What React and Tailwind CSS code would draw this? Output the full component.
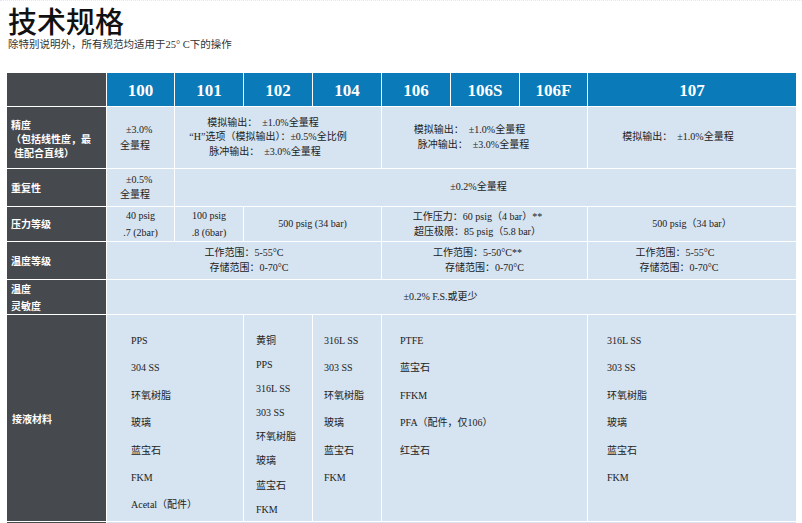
import React from "react";

const label = "bg-[#46494e] text-white font-bold text-[10px] leading-[14px] px-[4px] flex items-center font-['Noto_Sans_CJK_SC',sans-serif]";
const cell = "bg-[#d6e3f0] text-[#222] text-[10px] leading-[14.5px]";
const center = `${cell} flex flex-col items-center justify-center text-center`;
const head = "bg-[#0a7ab9] text-white font-bold text-[17px] pt-[3px] flex items-center justify-center font-['Liberation_Serif',serif]";

const List = ({ items, className }) => (
  <div className={`${cell} ${className}`}>
    {items.map((t, i) => (
      <div key={i}>{t}</div>
    ))}
  </div>
);

const App = () => {
  return (
    <div className="w-[802px] h-[523px] overflow-hidden bg-white border-t border-dotted border-gray-200 font-['Liberation_Serif','Noto_Sans_CJK_SC',serif]">
      <div className="pl-[8px] pt-[3px]">
        <h1 className="text-[29px] leading-[32px] font-medium text-[#111] font-['Noto_Sans_CJK_SC',sans-serif]">技术规格</h1>
        <p className="mt-[2px] text-[10.5px] leading-[14px] text-[#333]">除特别说明外，所有规范均适用于25° C下的操作</p>
      </div>

      <div className="ml-[7px] mt-[21px] w-[789px] grid gap-px bg-white grid-cols-[99px_67px_68px_68px_68px_68px_68px_67px_208px] grid-rows-[33px_61px_37px_34px_37px_34px_206px_20px]">
        {/* header */}
        <div className="bg-[#46494e]"></div>
        <div className={head}>100</div>
        <div className={head}>101</div>
        <div className={head}>102</div>
        <div className={head}>104</div>
        <div className={head}>106</div>
        <div className={head}>106S</div>
        <div className={head}>106F</div>
        <div className={head}>107</div>

        {/* 精度 */}
        <div className={`${label} flex-col !items-start justify-center pt-[2px]`}>
          <div>精度</div>
          <div>（包括线性度，最</div>
          <div className="ml-[3px]">佳配合直线）</div>
        </div>
        <div className={`${cell} flex flex-col justify-center pl-[13px] leading-[16px]`}>
          <div className="pl-[6px]">±3.0%</div>
          <div>全量程</div>
        </div>
        <div className={`${center} col-span-3 pr-[20px]`}>
          <div className="pr-[10px]">模拟输出：&nbsp;&nbsp;±1.0%全量程</div>
          <div>“H”选项（模拟输出）：±0.5%全比例</div>
          <div className="pr-[6px]">脉冲输出：&nbsp;&nbsp;±3.0%全量程</div>
        </div>
        <div className={`${center} col-span-3 pr-[30px]`}>
          <div>模拟输出：&nbsp;&nbsp;±1.0%全量程</div>
          <div className="pl-[8px]">脉冲输出：&nbsp;&nbsp;±3.0%全量程</div>
        </div>
        <div className={`${center} pr-[28px]`}>
          <div>模拟输出：&nbsp;&nbsp;±1.0%全量程</div>
        </div>

        {/* 重复性 */}
        <div className={label}>重复性</div>
        <div className={`${cell} flex flex-col justify-center pl-[13px]`}>
          <div className="pl-[6px]">±0.5%</div>
          <div>全量程</div>
        </div>
        <div className={`${center} col-span-7 pr-[14px]`}>±0.2%全量程</div>

        {/* 压力等级 */}
        <div className={label}>压力等级</div>
        <div className={`${center} leading-[17px]`}>
          <div>40 psig</div>
          <div>.7 (2bar)</div>
        </div>
        <div className={`${center} leading-[17px]`}>
          <div>100 psig</div>
          <div>.8 (6bar)</div>
        </div>
        <div className={`${center} col-span-2`}>500 psig (34 bar)</div>
        <div className={`${center} col-span-3 text-[8.5px] leading-[15px] pr-[14px]`}>
          <div>工作压力：60 psig（4 bar）**</div>
          <div>超压极限：85 psig（5.8 bar）</div>
        </div>
        <div className={center}>500 psig（34 bar）</div>

        {/* 温度等级 */}
        <div className={label}>温度等级</div>
        <div className={`${center} col-span-4`}>
          <div>工作范围：5-55°C</div>
          <div className="pl-[10px]">存储范围：0-70°C</div>
        </div>
        <div className={`${center} col-span-3 pr-[14px]`}>
          <div>工作范围：5-50°C**</div>
          <div className="pl-[14px]">存储范围：0-70°C</div>
        </div>
        <div className={`${center} pr-[34px]`}>
          <div>工作范围：5-55°C</div>
          <div className="pl-[8px]">存储范围：0-70°C</div>
        </div>

        {/* 温度灵敏度 */}
        <div className={`${label} flex-col !items-start justify-center leading-[17px]`}>
          <div>温度</div>
          <div>灵敏度</div>
        </div>
        <div className={`${center} col-span-8 pr-[22px]`}>±0.2% F.S.或更少</div>

        {/* 接液材料 */}
        <div className={`${label} pl-[5px] pt-[2px]`}>接液材料</div>
        <List
          className="col-span-2 pl-[24px] pt-[12px] leading-[27.4px]"
          items={["PPS", "304 SS", "环氧树脂", "玻璃", "蓝宝石", "FKM", "Acetal（配件）"]}
        />
        <List
          className="pl-[12px] pt-[14px] leading-[24.1px]"
          items={["黄铜", "PPS", "316L SS", "303 SS", "环氧树脂", "玻璃", "蓝宝石", "FKM"]}
        />
        <List
          className="pl-[11px] pt-[12px] leading-[27.4px]"
          items={["316L SS", "303 SS", "环氧树脂", "玻璃", "蓝宝石", "FKM"]}
        />
        <List
          className="col-span-3 pl-[18px] pt-[12px] leading-[27.4px]"
          items={["PTFE", "蓝宝石", "FFKM", "PFA（配件，仅106）", "红宝石"]}
        />
        <List
          className="pl-[19px] pt-[12px] leading-[27.4px]"
          items={["316L SS", "303 SS", "环氧树脂", "玻璃", "蓝宝石", "FKM"]}
        />

        {/* next row (cut off) */}
        <div className="bg-[#46494e]"></div>
        <div className={`${cell} col-span-8`}></div>
      </div>
    </div>
  );
};

export default App;
